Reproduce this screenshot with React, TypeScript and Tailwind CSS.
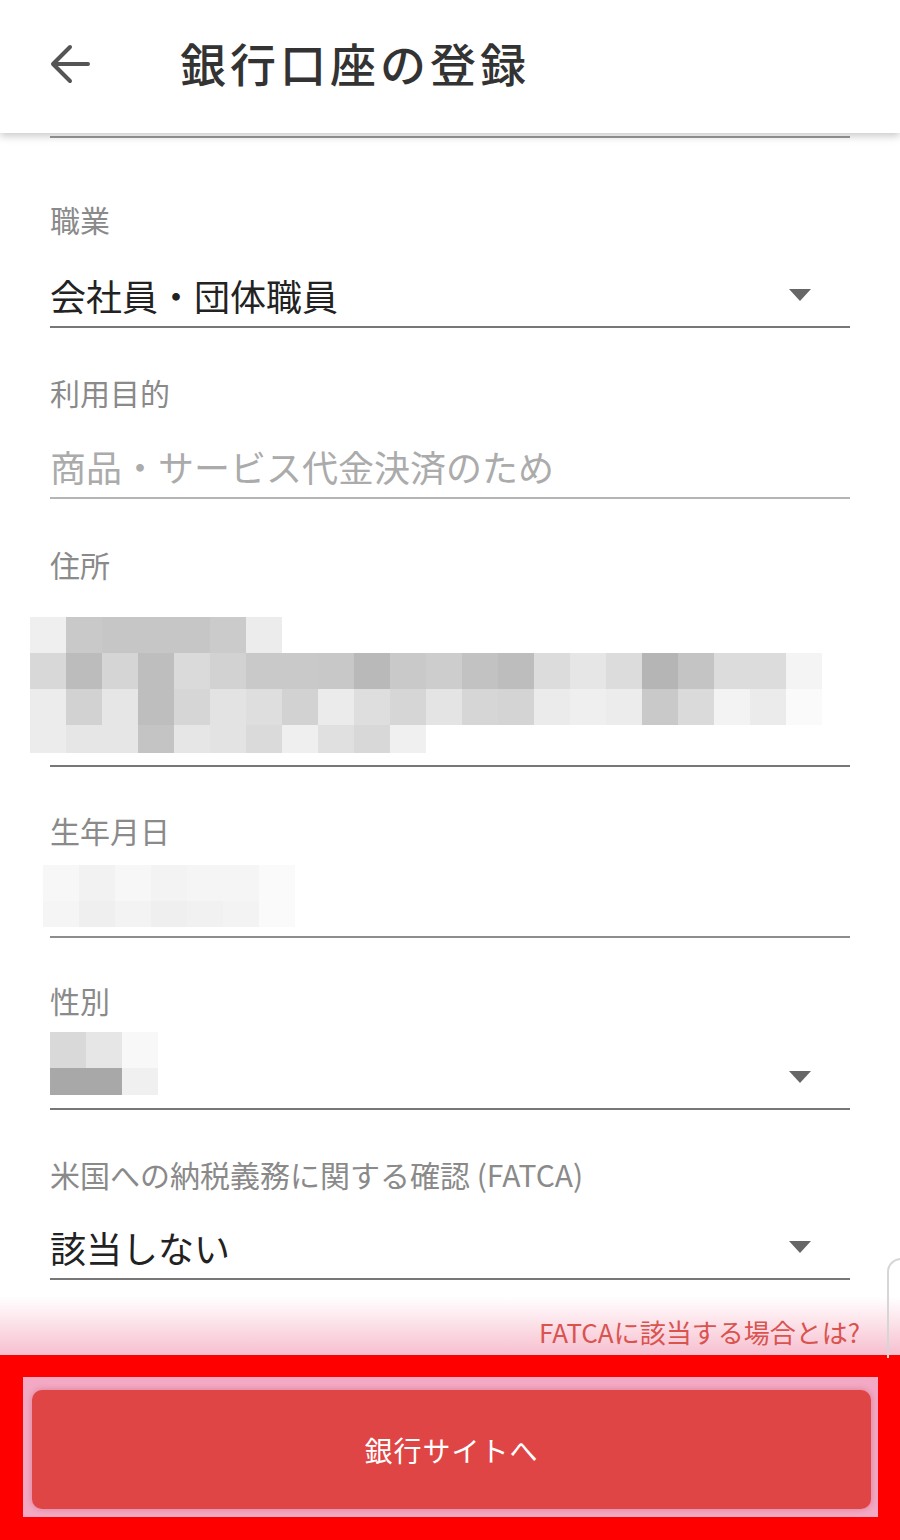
import React from "react";

const font = "font-['Noto_Sans_CJK_JP','Noto_Sans',sans-serif]";

const addr: (string | null)[][] = [
  ["#efefef", "#c9c9c9", "#c6c6c6", "#c6c6c6", "#c6c6c6", "#cbcbcb", "#ececec"],
  ["#d8d8d8", "#bcbcbc", "#d5d5d5", "#bebebe", "#dadada", "#d2d2d2", "#c9c9c9", "#c9c9c9", "#c8c8c8", "#b9b9b9", "#c9c9c9", "#cdcdcd", "#c2c2c2", "#bdbdbd", "#dcdcdc", "#e6e6e6", "#dcdcdc", "#b5b5b5", "#c4c4c4", "#dcdcdc", "#dcdcdc", "#f4f4f4"],
  ["#ececec", "#d2d2d2", "#e6e6e6", "#bebebe", "#d6d6d6", "#e3e3e3", "#dedede", "#d2d2d2", "#ebebeb", "#dedede", "#d6d6d6", "#e4e4e4", "#d6d6d6", "#d4d4d4", "#ebebeb", "#efefef", "#ececec", "#c9c9c9", "#dadada", "#f3f3f3", "#ebebeb", "#fafafa"],
  ["#ececec", "#e6e6e6", "#e6e6e6", "#c4c4c4", "#e6e6e6", "#e3e3e3", "#dadada", "#efefef", "#e0e0e0", "#d8d8d8", "#f0f0f0"],
];
const addrH = [36, 36, 36, 28];

const birth: string[][] = [
  ["#f7f7f7", "#f2f2f2", "#f7f7f7", "#f3f3f3", "#f5f5f5", "#f5f5f5", "#fafafa"],
  ["#f5f5f5", "#efefef", "#f3f3f3", "#efefef", "#f1f1f1", "#f3f3f3", "#fafafa"],
];

const gender: string[][] = [
  ["#d9d9d9", "#e6e6e6", "#f8f8f8"],
  ["#a8a8a8", "#a8a8a8", "#f0f0f0"],
];

function Mosaic({ rows, heights, cell }: { rows: (string | null)[][]; heights: number[]; cell: number }) {
  return (
    <div className="flex flex-col">
      {rows.map((r, i) => (
        <div key={i} className="flex">
          {r.map((c, j) => (
            <div key={j} style={{ backgroundColor: c ?? "transparent", width: cell, height: heights[i] }} />
          ))}
        </div>
      ))}
    </div>
  );
}

function Caret() {
  return (
    <svg width="22" height="12" viewBox="0 0 22 12" className="mr-[39px] shrink-0">
      <polygon points="0,0 22,0 11,12" fill="#666" />
    </svg>
  );
}

function Label({ children }: { children: React.ReactNode }) {
  return <div className="h-[40px] leading-[40px] text-[30px] text-[#8a8a8a] whitespace-nowrap">{children}</div>;
}

export default function App() {
  return (
    <div className={`${font} w-[900px] h-[1540px] bg-white flex flex-col overflow-hidden relative`}>
      {/* Header */}
      <div className="relative z-10 h-[133px] pb-[6px] bg-white shadow-[0_3px_8px_rgba(0,0,0,0.22)] flex items-center shrink-0">
        <svg width="40" height="40" viewBox="0 0 40 40" className="ml-[50px]">
          <path d="M38 20 H4 M20 3 L3 20 L20 37" fill="none" stroke="#555" strokeWidth="4" strokeLinecap="round" strokeLinejoin="round" />
        </svg>
        <div className="ml-[90px] -mt-[4px] text-[46px] leading-none font-medium text-[#333] tracking-[4px]">銀行口座の登録</div>
      </div>

      <div className="block px-[50px] flex-1 min-h-0 overflow-hidden">
        <div className="pt-[3px]">
          <div className="h-[2px] bg-[#999]" />
        </div>

        {/* 職業 */}
        <div className="pt-[61px]">
          <Label>職業</Label>
          <div className="h-[56px] mt-[28px] flex items-center justify-between">
            <span className="text-[36px] text-[#222]">会社員・団体職員</span>
            <Caret />
          </div>
          <div className="mt-[3px] h-[2px] bg-[#777]" />
        </div>

        {/* 利用目的 */}
        <div className="pt-[44px]">
          <Label>利用目的</Label>
          <div className="h-[56px] mt-[26px] flex items-center">
            <span className="text-[36px] text-[#ababab]">商品・サービス代金決済のため</span>
          </div>
          <div className="mt-[3px] h-[2px] bg-[#b5b5b5]" />
        </div>

        {/* 住所 */}
        <div className="pt-[45px]">
          <Label>住所</Label>
          <div className="mt-[33px] -ml-[20px]">
            <Mosaic rows={addr} heights={addrH} cell={36} />
          </div>
          <div className="mt-[12px] h-[2px] bg-[#777]" />
        </div>

        {/* 生年月日 */}
        <div className="pt-[43px]">
          <Label>生年月日</Label>
          <div className="mt-[15px] -ml-[7px]">
            <Mosaic rows={birth} heights={[36, 26]} cell={36} />
          </div>
          <div className="mt-[9px] h-[2px] bg-[#8d8d8d]" />
        </div>

        {/* 性別 */}
        <div className="pt-[42px]">
          <Label>性別</Label>
          <div className="mt-[12px] h-[74px] flex items-start justify-between">
            <Mosaic rows={gender} heights={[36, 27]} cell={36} />
            <div className="mt-[39px]">
              <Caret />
            </div>
          </div>
          <div className="mt-[2px] h-[2px] bg-[#777]" />
        </div>

        {/* FATCA */}
        <div className="pt-[44px]">
          <Label>米国への納税義務に関する確認 (FATCA)</Label>
          <div className="h-[56px] mt-[25px] flex items-center justify-between">
            <span className="text-[36px] text-[#222]">該当しない</span>
            <Caret />
          </div>
          <div className="mt-[3px] h-[2px] bg-[#777]" />
        </div>
      </div>

      {/* link row with pink fade */}
      <div className="h-[73px] shrink-0 bg-gradient-to-b from-white from-20% to-[#f6bfd0] flex items-center justify-end pr-[40px] pt-[26px]">
        <span className="text-[26px] leading-none text-[#d9534f]">FATCAに該当する場合とは?</span>
      </div>

      {/* faint right-edge panel */}
      <div className="absolute left-[887px] top-[1258px] w-[30px] h-[100px] border-l-2 border-t-2 border-[#d6d6d6] rounded-tl-[14px]" />

      {/* Button area with red frame */}
      <div className="h-[185px] shrink-0 bg-[#ff0000] pt-[22px] pb-[23px] pl-[23px] pr-[22px]">
        <div className="h-full bg-[#f3a9c4] pt-[13px] pb-[8px] pl-[9px] pr-[7px]">
          <div className="h-full rounded-[10px] bg-[#e04545] shadow-[0_0_6px_rgba(180,40,60,0.35)] flex items-center justify-center">
            <span className="text-[28px] text-white tracking-[1px]">銀行サイトへ</span>
          </div>
        </div>
      </div>
    </div>
  );
}
